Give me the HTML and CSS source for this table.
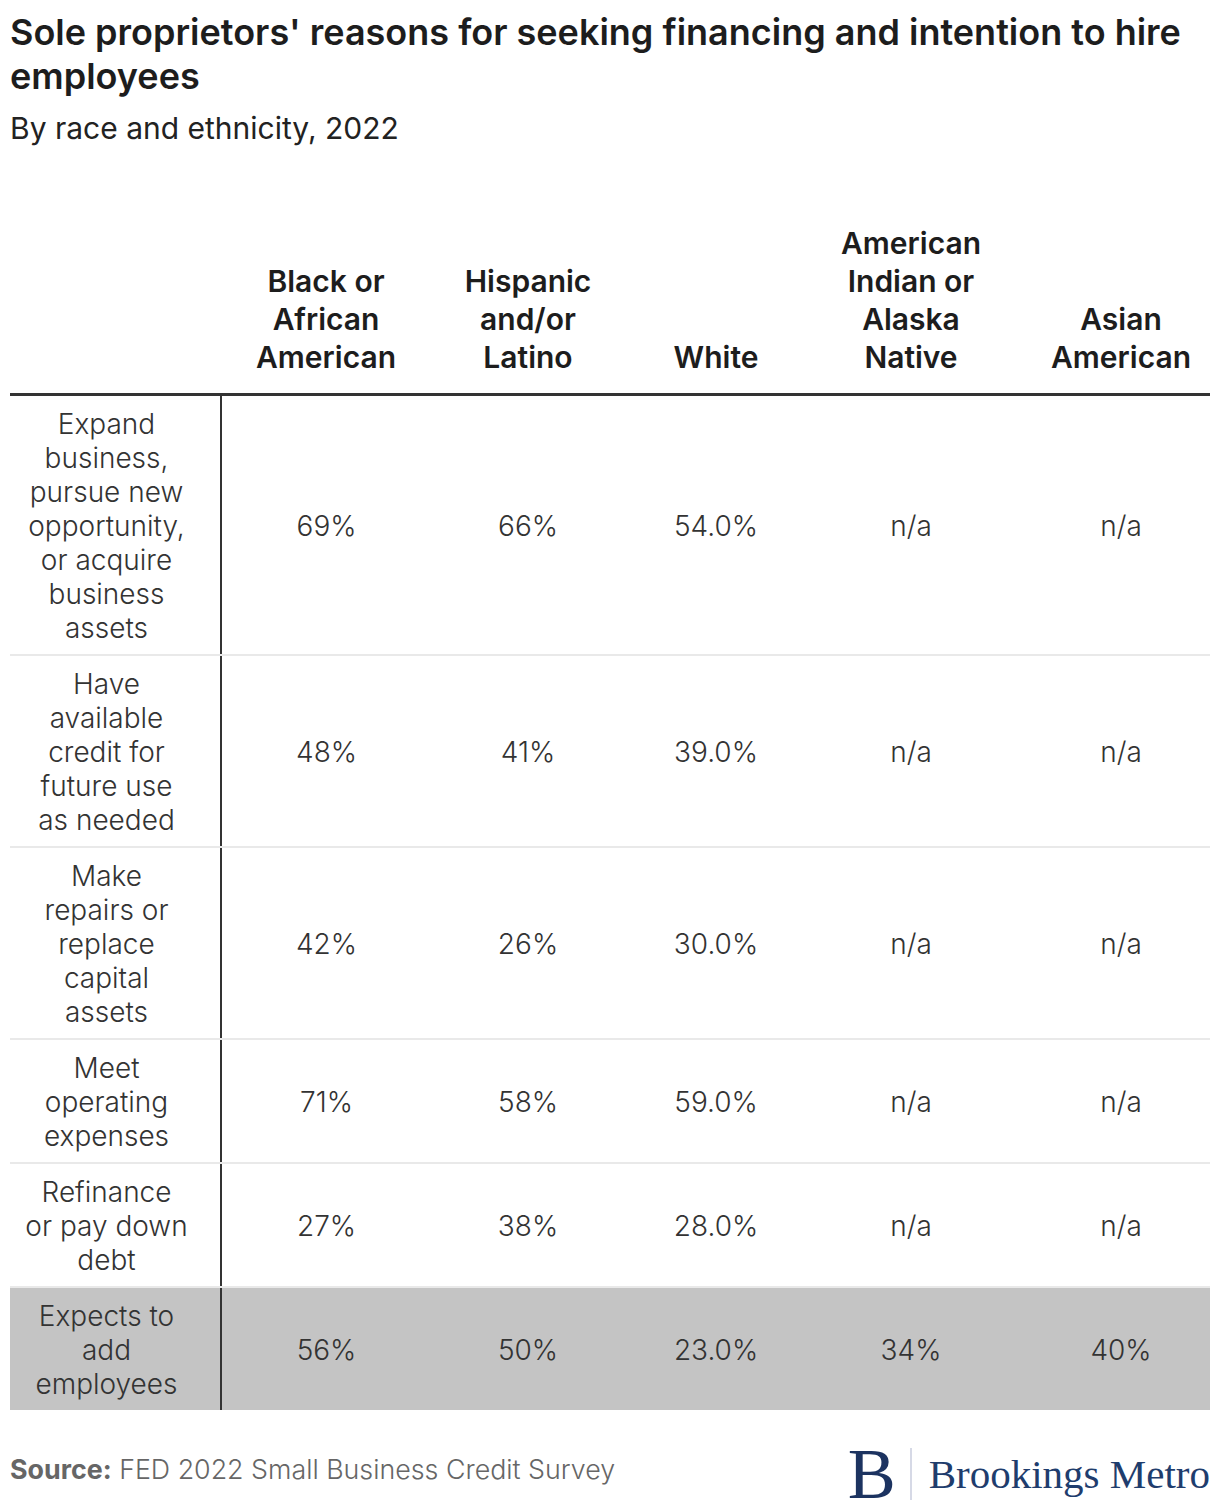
FILE: index.html
```html
<!DOCTYPE html>
<html lang="en">
<head>
<meta charset="utf-8">
<title>Sole proprietors' reasons for seeking financing</title>
<link rel="stylesheet" href="styles.css">
</head>
<body>
<div class="chart">
  <header class="head">
    <h1 class="title">Sole proprietors' reasons for seeking financing and intention to hire employees</h1>
    <p class="subtitle">By race and ethnicity, 2022</p>
  </header>
  <table class="data">
    <colgroup>
      <col class="c1"><col class="c2"><col class="c3"><col class="c4"><col class="c5"><col class="c6">
    </colgroup>
    <thead>
      <tr>
        <th class="hcell"></th>
        <th class="hcell">Black or<br>African<br>American</th>
        <th class="hcell">Hispanic<br>and/or<br>Latino</th>
        <th class="hcell">White</th>
        <th class="hcell">American<br>Indian or<br>Alaska<br>Native</th>
        <th class="hcell last">Asian<br>American</th>
      </tr>
    </thead>
    <tbody>
      <tr>
        <td class="label">Expand<br>business,<br>pursue new<br>opportunity,<br>or acquire<br>business<br>assets</td>
        <td>69%</td><td>66%</td><td>54.0%</td><td>n/a</td><td class="last">n/a</td>
      </tr>
      <tr>
        <td class="label">Have<br>available<br>credit for<br>future use<br>as needed</td>
        <td>48%</td><td>41%</td><td>39.0%</td><td>n/a</td><td class="last">n/a</td>
      </tr>
      <tr>
        <td class="label">Make<br>repairs or<br>replace<br>capital<br>assets</td>
        <td>42%</td><td>26%</td><td>30.0%</td><td>n/a</td><td class="last">n/a</td>
      </tr>
      <tr>
        <td class="label">Meet<br>operating<br>expenses</td>
        <td>71%</td><td>58%</td><td>59.0%</td><td>n/a</td><td class="last">n/a</td>
      </tr>
      <tr>
        <td class="label">Refinance<br>or pay down<br>debt</td>
        <td>27%</td><td>38%</td><td>28.0%</td><td>n/a</td><td class="last">n/a</td>
      </tr>
      <tr class="highlight">
        <td class="label">Expects to<br>add<br>employees</td>
        <td>56%</td><td>50%</td><td>23.0%</td><td>34%</td><td class="last">40%</td>
      </tr>
    </tbody>
  </table>
  <footer class="foot">
    <p class="source"><span class="source-label">Source:</span> FED 2022 Small Business Credit Survey</p>
    <div class="logo">
      <span class="logo-b">B</span>
      <span class="logo-divider"></span>
      <span class="logo-name">Brookings Metro</span>
    </div>
  </footer>
</div>
</body>
</html>
```

FILE: styles.css
```css
html, body {
  margin: 0;
  padding: 0;
  background: #ffffff;
}

.chart {
  width: 1200px;
  padding: 10px 10px 0 10px;
  font-family: Inter, "Noto Sans", sans-serif;
  color: #333333;
}

.title {
  margin: 0;
  font-size: 36px;
  line-height: 44px;
  font-weight: 600;
  color: #1d1d1d;
}

.subtitle {
  margin: 0;
  padding-top: 10px;
  font-size: 30px;
  line-height: 40px;
  font-weight: 400;
  color: #222222;
}

.data {
  margin-top: 76px;
  width: 1200px;
  border-collapse: collapse;
  table-layout: fixed;
}

.c1 { width: 211px; }
.c2 { width: 210px; }
.c3 { width: 194px; }
.c4 { width: 182px; }
.c5 { width: 208px; }
.c6 { width: 195px; }

.hcell {
  vertical-align: bottom;
  text-align: center;
  font-size: 30px;
  line-height: 38px;
  font-weight: 600;
  color: #1d1d1d;
  padding: 0 0 17px 0;
  border-bottom: 3px solid #333333;
}

.data td {
  text-align: center;
  vertical-align: middle;
  font-size: 28px;
  line-height: 34px;
  font-weight: 300;
  color: #333333;
  padding: 11px 0 9px 0;
  border-bottom: 2px solid #e9e9e9;
}

.data td.label {
  padding-right: 17px;
  border-right: 2px solid #333333;
}

.data .last {
  padding-left: 17px;
}

.data tr.highlight td {
  background: #c4c4c4;
  border-top: 2px solid #aaaaaa;
  border-bottom: none;
}

.foot {
  display: flex;
  justify-content: space-between;
  align-items: center;
  margin-top: 18px;
}

.source {
  margin: 0;
  font-size: 26.8px;
  line-height: 34px;
  font-weight: 300;
  color: #666666;
}

.source-label {
  font-weight: 700;
}

.logo {
  display: flex;
  align-items: center;
  padding-top: 10px;
  color: #1f3a68;
  font-family: "Liberation Serif", "DejaVu Serif", serif;
}

.logo-b {
  font-size: 72px;
  line-height: 72px;
  color: #1c3360;
  margin-right: 14px;
}

.logo-divider {
  width: 2px;
  height: 52px;
  background: #d6d9e6;
  margin-right: 17px;
}

.logo-name {
  font-size: 41px;
  line-height: 50px;
  color: #1f3d6d;
}
```
